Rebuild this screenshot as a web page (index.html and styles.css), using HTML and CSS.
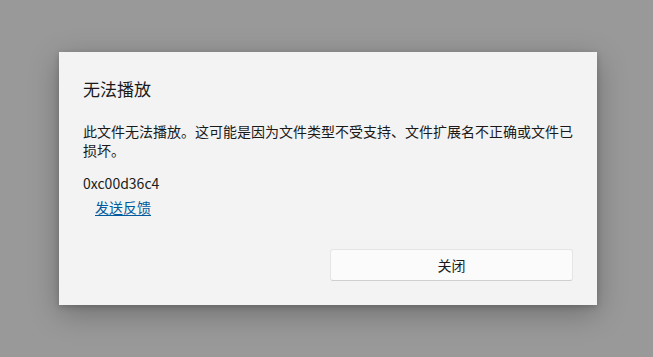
FILE: index.html
```html
<!DOCTYPE html>
<html lang="zh-CN">
<head>
<meta charset="utf-8">
<title>无法播放</title>
<link rel="stylesheet" href="styles.css">
</head>
<body>
<div class="overlay">
  <div class="dialog" role="dialog">
    <h1 class="title">无法播放</h1>
    <p class="message">此文件无法播放。这可能是因为文件类型不受支持、文件扩展名不正确或文件已损坏。</p>
    <p class="code">0xc00d36c4</p>
    <a class="link" href="#">发送反馈</a>
    <div class="footer">
      <span></span>
      <button class="btn">关闭</button>
    </div>
  </div>
</div>
</body>
</html>
```
FILE: styles.css
```css
html, body {
  margin: 0;
  padding: 0;
  height: 100%;
}
body {
  background: #999999;
  font-family: "Noto Sans CJK SC", "Noto Sans", sans-serif;
  color: #1a1a1a;
}
.overlay {
  height: 100%;
  display: flex;
  align-items: center;
  justify-content: center;
  padding-left: 3px;
  box-sizing: border-box;
}
.dialog {
  width: 538px;
  height: 253px;
  box-sizing: border-box;
  padding: 24px;
  background: #f3f3f3;
  box-shadow: 0 8px 28px rgba(0, 0, 0, 0.28), 0 2px 6px rgba(0, 0, 0, 0.18);
  display: flex;
  flex-direction: column;
}
.title {
  margin: 0 0 21px;
  font-size: 17px;
  line-height: 25px;
  font-weight: 400;
}
.message {
  margin: 0;
  font-size: 14px;
  line-height: 19px;
}
.code {
  margin: 14px 0 0;
  font-size: 14px;
  line-height: 19px;
}
.link {
  margin: 5px 0 0 12px;
  align-self: flex-start;
  font-size: 14px;
  line-height: 19px;
  color: #005a9e;
  text-decoration: underline;
  text-underline-offset: 2px;
}
.footer {
  margin-top: auto;
  display: grid;
  grid-template-columns: 1fr 1fr;
  gap: 4px;
}
.btn {
  height: 32px;
  background: #fbfbfb;
  border: 1px solid #e5e5e5;
  border-bottom-color: #cfcfcf;
  border-radius: 3px;
  font-family: "Noto Sans CJK SC", "Noto Sans", sans-serif;
  font-size: 14px;
  color: #1a1a1a;
  padding: 0;
}
```
